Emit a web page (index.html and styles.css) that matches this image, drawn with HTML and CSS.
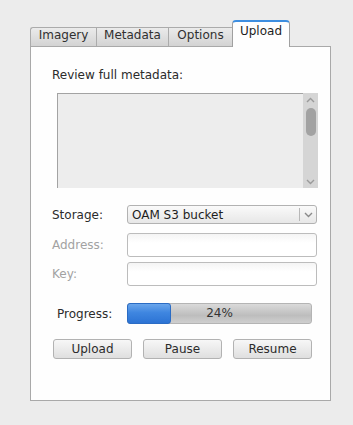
FILE: index.html
```html
<!DOCTYPE html>
<html>
  <head>
    <meta charset="UTF-8">
    <title>Upload</title>
    <link rel="stylesheet" href="styles.css">
  </head>
  <body>
    <div class="window">
      <div class="tabs">
        <div class="tab tab-imagery">Imagery</div>
        <div class="tab tab-metadata">Metadata</div>
        <div class="tab tab-options">Options</div>
        <div class="tab tab-upload active">Upload</div>
      </div>

      <div class="panel">
        <div class="review-label">Review full metadata:</div>
        <div class="metadata-box">
          <div class="metadata-text"></div>
          <div class="scrollbar">
            <svg class="arrow" width="9" height="6" viewBox="0 0 9 6"><path d="M1 5 L4.5 1.5 L8 5" fill="none" stroke="#9a9a9a" stroke-width="1.4"/></svg>
            <div class="thumb"></div>
            <div class="track-space"></div>
            <svg class="arrow" width="9" height="6" viewBox="0 0 9 6"><path d="M1 1 L4.5 4.5 L8 1" fill="none" stroke="#9a9a9a" stroke-width="1.4"/></svg>
          </div>
        </div>

        <div class="row row-storage">
          <label class="field-label">Storage:</label>
          <div class="combo">
            <span class="combo-text">OAM S3 bucket</span>
            <span class="combo-button">
              <svg width="9" height="6" viewBox="0 0 9 6"><path d="M1 1 L4.5 4.5 L8 1" fill="none" stroke="#8a8a8a" stroke-width="1.4"/></svg>
            </span>
          </div>
        </div>

        <div class="row row-address">
          <label class="field-label disabled">Address:</label>
          <input type="text" class="field-input">
        </div>

        <div class="row row-key">
          <label class="field-label disabled">Key:</label>
          <input type="text" class="field-input">
        </div>

        <div class="row row-progress">
          <label class="field-label progress-label">Progress:</label>
          <div class="progress">
            <div class="progress-chunk" style="width: 44px;"></div>
            <span class="progress-text">24%</span>
          </div>
        </div>

        <div class="buttons">
          <button class="btn">Upload</button>
          <button class="btn">Pause</button>
          <button class="btn">Resume</button>
        </div>
      </div>
    </div>
  </body>
</html>
```

FILE: styles.css
```css
body {
  margin: 0;
  background-color: #ececec;
  font-family: "DejaVu Sans", sans-serif;
  font-size: 12px;
  color: #2b2b2b;
}

.window {
  padding: 20px 0 0 30px;
}

/* tab bar */
.tabs {
  display: flex;
  align-items: flex-end;
  height: 26px;
}

.tab {
  box-sizing: border-box;
  height: 19px;
  line-height: 15px;
  text-align: center;
  border-top: 1px solid #ababab;
  border-left: 1px solid #ababab;
  background: linear-gradient(#ebebeb, #d3d3d3);
  color: #303030;
}

.tab-imagery {
  width: 66px;
  border-top-left-radius: 3px;
}

.tab-metadata {
  width: 72px;
}

.tab-options {
  width: 64px;
}

.tab-upload {
  width: 58px;
}

.tab.active {
  position: relative;
  z-index: 1;
  height: 27px;
  margin-bottom: -1px;
  line-height: 19px;
  background: #fefefe;
  border-top: 2px solid #3d8ee0;
  border-left: 1px solid #a0a0a0;
  border-right: 1px solid #a0a0a0;
  border-radius: 4px 4px 0 0;
  color: #1e1e1e;
}

/* panel */
.panel {
  box-sizing: border-box;
  width: 301px;
  height: 355px;
  background-color: #fefefe;
  border: 1px solid #a9a9a9;
  padding: 21px 0 0 21px;
}

.review-label {
  line-height: 14px;
}

.metadata-box {
  display: flex;
  width: 261px;
  height: 95px;
  margin: 11px 0 0 5px;
}

.metadata-text {
  flex: 1;
  background-color: #ededed;
  border-top: 1px solid #a3a3a3;
  border-left: 1px solid #a3a3a3;
}

.scrollbar {
  width: 15px;
  display: flex;
  flex-direction: column;
  align-items: center;
  background-color: #d5d5d5;
  padding: 4px 0 3px;
  box-sizing: border-box;
}

.thumb {
  width: 10px;
  height: 28px;
  margin-top: 5px;
  border-radius: 5px;
  background-color: #a2a2a2;
}

.track-space {
  flex: 1;
}

/* form rows */
.row {
  display: flex;
  align-items: center;
}

.field-label {
  width: 75px;
  line-height: 14px;
}

.field-label.disabled {
  color: #a2a2a2;
}

.row-storage {
  margin-top: 17px;
}

.combo {
  box-sizing: border-box;
  display: flex;
  align-items: center;
  width: 190px;
  height: 19px;
  border: 1px solid #b2b2b2;
  border-radius: 3px;
  background: linear-gradient(#fafafa, #e7e7e7);
}

.combo-text {
  flex: 1;
  padding-left: 4px;
  color: #1e1e1e;
}

.combo-button {
  display: flex;
  align-items: center;
  justify-content: center;
  width: 16px;
  height: 13px;
  border-left: 1px solid #b8b8b8;
}

.field-input {
  box-sizing: border-box;
  width: 190px;
  height: 24px;
  margin: 0;
  border: 1px solid #bcbcbc;
  border-radius: 3px;
  background: linear-gradient(#f4f4f4, #ffffff 40%);
}

.row-address {
  margin-top: 9px;
}

.row-key {
  margin-top: 5px;
}

.row-progress {
  margin-top: 17px;
}

.progress-label {
  width: 70px;
  margin-left: 5px;
}

.progress {
  position: relative;
  box-sizing: border-box;
  width: 185px;
  height: 21px;
  border: 1px solid #b4b4b4;
  border-radius: 3px;
  background: linear-gradient(#dadada, #bdbdbd 60%, #cfcfcf);
}

.progress-chunk {
  box-sizing: border-box;
  border: 1px solid #2b6cc4;
  border-radius: 3px;
  margin: -1px 0 0 -1px;
  height: 21px;
  background: linear-gradient(#6aa6ec, #3f86e0 45%, #2c73d4);
}

.progress-text {
  position: absolute;
  left: 0;
  right: 0;
  top: 2px;
  text-align: center;
  color: #333;
}

/* buttons */
.buttons {
  display: flex;
  gap: 11px;
  margin: 15px 0 0 1px;
}

.btn {
  box-sizing: border-box;
  width: 79px;
  height: 20px;
  padding: 0;
  font-family: "DejaVu Sans", sans-serif;
  font-size: 12px;
  color: #2b2b2b;
  border: 1px solid #b2b2b2;
  border-radius: 3px;
  background: linear-gradient(#f7f7f7, #dfdfdf);
}
```
